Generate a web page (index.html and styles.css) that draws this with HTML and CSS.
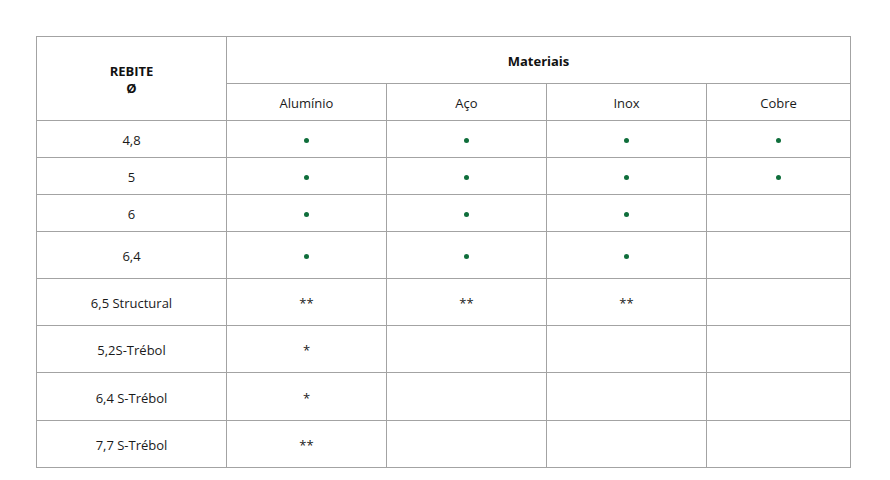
FILE: index.html
```html
<!DOCTYPE html>
<html lang="pt">
<head>
<meta charset="utf-8">
<title>Rebites</title>
<link rel="stylesheet" href="styles.css">
</head>
<body>
<div class="page">
<table class="grid">
  <colgroup>
    <col class="c-first">
    <col class="c-mat">
    <col class="c-mat">
    <col class="c-mat">
    <col class="c-last">
  </colgroup>
  <thead>
    <tr class="h-top">
      <th rowspan="2" class="rebite">REBITE<br>Ø</th>
      <th colspan="4" class="materiais">Materiais</th>
    </tr>
    <tr class="h-sub">
      <td>Alumínio</td><td>Aço</td><td>Inox</td><td>Cobre</td>
    </tr>
  </thead>
  <tbody>
    <tr class="r-s"><td>4,8</td><td><span class="dot"></span></td><td><span class="dot"></span></td><td><span class="dot"></span></td><td><span class="dot"></span></td></tr>
    <tr class="r-s"><td>5</td><td><span class="dot"></span></td><td><span class="dot"></span></td><td><span class="dot"></span></td><td><span class="dot"></span></td></tr>
    <tr class="r-s"><td>6</td><td><span class="dot"></span></td><td><span class="dot"></span></td><td><span class="dot"></span></td><td></td></tr>
    <tr class="r-l"><td>6,4</td><td><span class="dot"></span></td><td><span class="dot"></span></td><td><span class="dot"></span></td><td></td></tr>
    <tr class="r-l"><td>6,5 Structural</td><td>**</td><td>**</td><td>**</td><td></td></tr>
    <tr class="r-l"><td>5,2S-Trébol</td><td>*</td><td></td><td></td><td></td></tr>
    <tr class="r-l r-x"><td>6,4 S-Trébol</td><td>*</td><td></td><td></td><td></td></tr>
    <tr class="r-l"><td>7,7 S-Trébol</td><td>**</td><td></td><td></td><td></td></tr>
  </tbody>
</table>
</div>
</body>
</html>
```

FILE: styles.css
```css
html, body {
  margin: 0;
  padding: 0;
  background: #ffffff;
}
.page {
  padding: 36px 0 0 36px;
  font-family: "Open Sans", "Noto Sans", sans-serif;
  font-size: 13px;
  color: #1a1a1a;
}
.grid {
  border-collapse: collapse;
  table-layout: fixed;
  width: 814px;
}
.c-first { width: 190px; }
.c-mat { width: 160px; }
.c-last { width: 144px; }
.grid th,
.grid td {
  border: 1px solid #a3a3a3;
  text-align: center;
  vertical-align: middle;
  padding: 2px 0 0 0;
  line-height: 16px;
}
.grid th {
  font-weight: 700;
  color: #111;
}
.grid th.rebite {
  padding-top: 2px;
  line-height: 17px;
}
.h-top { height: 47px; }
.h-sub { height: 37px; }
.r-s { height: 37px; }
.r-l { height: 47px; }
.r-x { height: 48px; }
.dot {
  display: inline-block;
  width: 5px;
  height: 5px;
  border-radius: 50%;
  background: #0f6e3b;
  vertical-align: middle;
  margin-bottom: 2px;
}
```
